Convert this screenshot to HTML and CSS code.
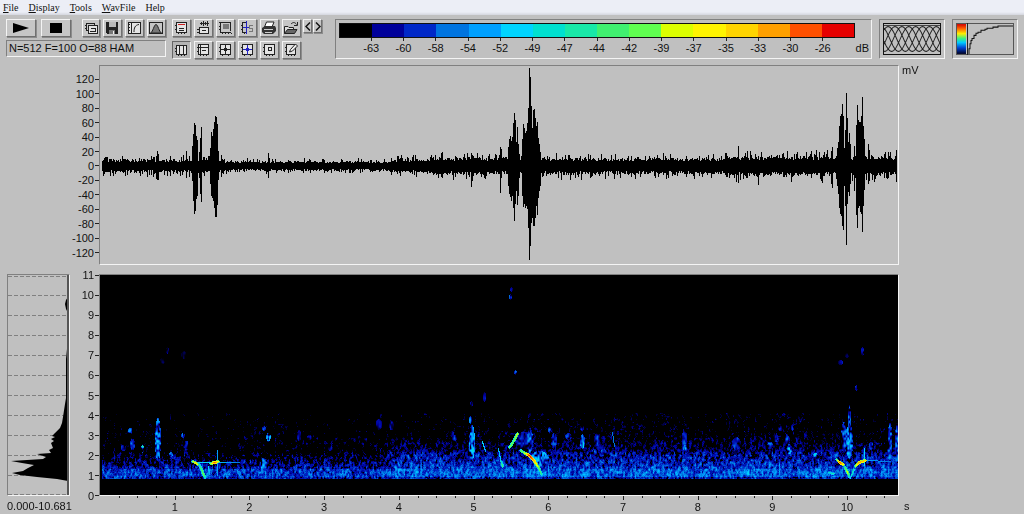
FILE: index.html
```html
<!DOCTYPE html>
<html lang="en">
<head>
<meta charset="utf-8">
<title>Sound analysis</title>
<link rel="stylesheet" href="styles.css">
</head>
<body>
<nav class="menu">
  <button class="menu-item"><u>F</u>ile</button>
  <button class="menu-item"><u>D</u>isplay</button>
  <button class="menu-item"><u>T</u>ools</button>
  <button class="menu-item"><u>W</u>avFile</button>
  <button class="menu-item">Help</button>
</nav>

<header class="toolbar">
  <div class="transport">
    <div class="row">
      <button class="btn wide" aria-label="Play"><svg width="16" height="10" viewBox="0 0 16 10"><path d="M0 0 16 5 0 10Z" fill="#000"/></svg></button>
      <button class="btn wide stop" aria-label="Stop"><svg width="12" height="10" viewBox="0 0 12 10"><path d="M0 0H12V10H0Z" fill="#000"/></svg></button>
      <button class="btn" aria-label="Copy"><svg class="icon" viewBox="0 0 16 14"><path class="k" d="M3.500 2.500H11.500V9.500H3.500ZM2 4.500H3M2 7.500H3"/><path class="k w" d="M5.500 4.500H14.500V12.500H5.500Z"/><path class="k" d="M7 10.500H13M8 7.500H12V10"/></svg></button>
      <button class="btn" aria-label="Save"><svg class="icon" viewBox="0 0 16 14"><path d="M2 1H14V13H3L2 12Z" fill="#222"/><path d="M5 1H12V6H5Z" fill="#b8b8b8"/><path d="M5 9H11V13H5Z" fill="#777"/><path d="M9 10H10V13H9Z" fill="#eee"/></svg></button>
      <button class="btn" aria-label="Transfer curve"><svg class="icon" viewBox="0 0 16 14"><path class="k w" d="M2.500 1.500H14.500V12.500H2.500Z"/><path class="k" d="M5.500 1V13M3 3.500H4M3 6.500H4M3 9.500H4"/><path class="k smooth" d="M8 11C8 7 9 4 13 3.500"/></svg></button>
      <button class="btn" aria-label="Window shape"><svg class="icon" viewBox="0 0 16 14"><path class="k" d="M1.500 1.500H14.500V12.500H1.500Z"/><path class="smooth" d="M2.500 12 C5 11 6 3.500 8 3.500S11 11 13.500 12Z" fill="#777" stroke="#222"/></svg></button>
    </div>
    <output class="status">N=512 F=100 O=88 HAM</output>
  </div>

  <div class="tools">
    <button class="btn" aria-label="Title"><svg class="icon" viewBox="0 0 16 14"><path class="k w" d="M3.500 1.500H13.500V11.500H3.500Z"/><path class="k" d="M2 4.500H3M2 8.500H3M5.500 12V13M8.500 12V13M11.500 12V13M6 7.500H11M6 9.500H11"/><path class="r" d="M5 3.500H12"/></svg></button>
    <button class="btn" aria-label="Envelope"><svg class="icon" viewBox="0 0 16 14"><path class="k" d="M5 2.500H14M6.500 1V4M8.500 0V5M10.500 1V4M12.500 0V5"/><path class="k w" d="M4.500 6.500H13.500V12.500H4.500Z"/><path class="k" d="M2 8.500H4M2 11.500H4M7 9.500H11"/></svg></button>
    <button class="btn" aria-label="Selection"><svg class="icon" viewBox="0 0 16 14"><path class="k" d="M3.500 1V11.500H14M2 1.500H13.500V10M2 5.500H3M2 8.500H3M5.500 12V13M8.500 12V13M11.500 12V13M14.500 12V13"/><path d="M6 3H12V8H6Z" fill="#777"/></svg></button>
    <button class="btn" aria-label="Spectrum"><svg class="icon" viewBox="0 0 16 14"><path class="k" d="M3.500 1.500H7M3.500 1V11.500H7M2 4.500H3M2 8.500H3M5.500 12V13"/><path class="b" d="M7.500 0V13M4 6.500H10"/><path d="M14 4.500H10.500V7.500H13.500V10.500H10" fill="none" stroke="#777"/></svg></button>
    <button class="btn" aria-label="Print"><svg class="icon smooth" viewBox="0 0 16 14"><path d="M5.500 1H13L11 6H3.500Z" fill="#fff" stroke="#222"/><path d="M1 7 4 5H14L15 7V10L12 13H3L1 11Z" fill="#333"/><path d="M3 8.500H12M4 11.500H11" stroke="#ccc"/></svg></button>
    <button class="btn" aria-label="Open"><svg class="icon smooth" viewBox="0 0 16 14"><path d="M1.500 12.500V5.500H5L6 6.500H10.500V8" fill="#ddd" stroke="#222"/><path d="M1.500 12.500 4.500 8.500H14L11.500 12.500Z" fill="#666" stroke="#222"/><path d="M8 3C10 1 12 1 13.500 3.500M14.500 1V4.500H11" fill="none" stroke="#222"/></svg></button>
    <button class="btn on" aria-label="Columns"><svg class="icon" viewBox="0 0 16 14"><path class="k w" d="M3.500 2.500H13.500V11.500H3.500Z"/><path class="k" d="M6.500 3V11M10.500 3V11M2 5.500H3M2 8.500H3M5.500 12V13M8.500 12V13M11.500 12V13"/></svg></button>
    <button class="btn" aria-label="Left panel"><svg class="icon" viewBox="0 0 16 14"><path class="k w" d="M3.500 1.500H13.500V11.500H3.500Z"/><path class="k" d="M5.500 2V11M4 4.500H13M7 7.500H11M2 4.500H3M2 8.500H3M5.500 12V13M8.500 12V13M11.500 12V13"/></svg></button>
    <button class="btn" aria-label="Crosshair"><svg class="icon" viewBox="0 0 16 14"><path class="k w" d="M3.500 1.500H13.500V11.500H3.500Z"/><path class="k" d="M8.500 2V11M4 6.500H13M2 4.500H3M2 8.500H3M5.500 12V13M11.500 12V13"/><path d="M7 5H10V8H7Z" fill="#222"/></svg></button>
    <button class="btn" aria-label="Blue crosshair"><svg class="icon" viewBox="0 0 16 14"><path class="k w" d="M3.500 1.500H13.500V11.500H3.500Z"/><path class="k" d="M2 4.500H3M2 8.500H3M5.500 12V13M11.500 12V13"/><path class="b" d="M8.500 2V12M4 6.500H13"/><path d="M7 5H10V8H7Z" fill="#2222c0"/></svg></button>
    <button class="btn" aria-label="Zoom box"><svg class="icon" viewBox="0 0 16 14"><path class="k w" d="M3.500 1.500H13.500V11.500H3.500Z"/><path class="k" d="M2 4.500H3M2 8.500H3M5.500 12V13M8.500 12V13M11.500 12V13M7.500 4.500H10.500V7.500H7.500Z"/></svg></button>
    <button class="btn" aria-label="Edit"><svg class="icon" viewBox="0 0 16 14"><path class="k w" d="M12.500 1.500H3.500V11.500H12.500Z"/><path class="k" d="M2 4.500H3M2 8.500H3M5.500 12V13M8.500 12V13M11.500 12V13"/><path class="smooth" d="M6.500 9 7.500 6.500 12.500 1 14.500 3 9.500 8Z" fill="#eee" stroke="#222"/></svg></button>
  </div>

  <div class="steps">
    <button class="btn step" aria-label="Previous"><svg width="6" height="9" viewBox="0 0 6 9"><path d="M5 .5 1 4.500 5 8.500" fill="none" stroke="#111" stroke-width="1.500"/></svg></button>
    <button class="btn step" aria-label="Next"><svg width="6" height="9" viewBox="0 0 6 9"><path d="M1 .5 5 4.500 1 8.500" fill="none" stroke="#111" stroke-width="1.500"/></svg></button>
  </div>

  <section class="panel scale">
    <div class="scale-body">
      <div class="swatches">
        <i class="c0"></i><i class="c1"></i><i class="c2"></i><i class="c3"></i><i class="c4"></i><i class="c5"></i><i class="c6"></i><i class="c7"></i><i class="c8"></i><i class="c9"></i><i class="c10"></i><i class="c11"></i><i class="c12"></i><i class="c13"></i><i class="c14"></i><i class="c15"></i>
      </div>
      <div class="scale-labels">
        <span></span><span class="lv">-63</span><span class="lv">-60</span><span class="lv">-58</span><span class="lv">-54</span><span class="lv">-52</span><span class="lv">-49</span><span class="lv">-47</span><span class="lv">-44</span><span class="lv">-42</span><span class="lv">-39</span><span class="lv">-37</span><span class="lv">-35</span><span class="lv">-33</span><span class="lv">-30</span><span class="lv">-26</span>
      </div>
    </div>
    <span class="db">dB</span>
  </section>

  <section class="panel side">
    <svg class="fill" viewBox="0 0 59 31" preserveAspectRatio="none">
      <path d="M.5 .5H58.500V30.500H.5Z" fill="none" stroke="#111"/>
      <path d="M1 2.500H58" fill="none" stroke="#444"/>
      <path id="lattice" fill="none" stroke="#222"/>
    </svg>
  </section>

  <section class="panel side">
    <svg class="fill" viewBox="0 0 58 31" preserveAspectRatio="none">
      <defs><linearGradient id="rainbow" x2="0" y2="1"><stop offset="0" stop-color="#d00000"/><stop offset=".15" stop-color="#ff6000"/><stop offset=".32" stop-color="#ffee00"/><stop offset=".48" stop-color="#40f080"/><stop offset=".62" stop-color="#00c8ff"/><stop offset=".8" stop-color="#0040d0"/><stop offset="1" stop-color="#000020"/></linearGradient></defs>
      <path d="M.5 .5H57.500V30.500H.5Z" fill="#c0c0c0" stroke="#555"/>
      <path d="M1 1H10V30H1Z" fill="url(#rainbow)"/>
      <path d="M11.500 0V31" stroke="#222"/>
      <path d="M13 30V25H14V20H15V17H16V15H18V12H20V10H22V9H25V7H29V6H31V5H37V4H42V3H57" fill="none" stroke="#111"/>
    </svg>
  </section>
</header>

<main class="plots">
  <div class="axis volts">
    <span>120</span><span>100</span><span>80</span><span>60</span><span>40</span><span>20</span><span>0</span><span>-20</span><span>-40</span><span>-60</span><span>-80</span><span>-100</span><span>-120</span>
  </div>
  <section class="plot wave"><canvas id="wave" width="798" height="198"></canvas></section>
  <span class="unit">mV</span>

  <section class="plot profile">
    <svg class="fill" viewBox="0 0 61 220" preserveAspectRatio="none">
      <path d="M0 1.500H59M0 20.500H59M0 40.500H59M0 60.500H59M0 80.500H59M0 100.500H59M0 120.500H59M0 140.500H59M0 160.500H59M0 180.500H59M0 200.500H59M0 219.500H59" stroke="#808080" stroke-dasharray="4 2"/>
      <path d="M60 64 58 84 58 123 57 129 55 142 54 148 52 153 47 158 44 161 47 162 43 164 46 166 43 168 45 173 41 175 43 178 29 179 38 182 35 184 3 186 14 188 26 190 20 193 15 196 4 198 12 200 29 202 49 204 60 206Z"/>
      <path d="M60 22 58 25 57 29 58 34 60 38Z"/>
      <path d="M60 0V220" stroke="#555" stroke-width="2"/>
    </svg>
  </section>
  <div class="axis freq">
    <span>11</span><span>10</span><span>9</span><span>8</span><span>7</span><span>6</span><span>5</span><span>4</span><span>3</span><span>2</span><span>1</span><span>0</span>
  </div>
  <section class="plot spectro"><canvas id="spectro" width="798" height="220"></canvas></section>

  <span class="range">0.000-10.681</span>
  <div class="time">
    <canvas id="ticks" class="ticks" width="798" height="4"></canvas>
    <div class="time-labels">
      <span></span><span>1</span><span>2</span><span>3</span><span>4</span><span>5</span><span>6</span><span>7</span><span>8</span><span>9</span><span>10</span>
    </div>
  </div>
  <span class="seconds">s</span>
</main>
<script src="plots.js"></script>
</body>
</html>
```

FILE: styles.css
```css
* { box-sizing: border-box; }
body {
  margin: 0;
  height: 100vh;
  display: flex;
  flex-direction: column;
  background: #c0c0c0;
  color: #111;
  font: 11px/14px "Liberation Sans", Arial, sans-serif;
}
button { font: inherit; color: inherit; padding: 0; border: 0; background: none; }

.menu {
  display: flex;
  gap: 10px;
  height: 15px;
  padding: 0 3px;
  background: linear-gradient(#eceef6 12px, #d4d6de);
}
.menu-item { font: 10px/14px "Liberation Serif", "Times New Roman", serif; }
.menu-item u { text-underline-offset: 1px; }

.toolbar { display: flex; align-items: stretch; padding: 4px 6px 0; }
.transport { width: 160px; display: flex; flex-direction: column; gap: 3px; }
.row { display: flex; gap: 3px; }
.btn {
  width: 19px;
  height: 18px;
  display: flex;
  align-items: center;
  justify-content: flex-start;
  background: #c6c6c6;
  border: 1px solid;
  border-color: #f4f4f4 #707070 #707070 #f4f4f4;
  box-shadow: 1px 1px 0 #8c8c8c;
}
.btn.wide { width: 30px; margin-right: 2px; justify-content: center; }
.btn.stop { margin-right: 8px; }
.btn.on { background: #b4b4b4; border-color: #666 #eee #eee #666; box-shadow: none; }
.icon { width: 16px; height: 14px; flex: none; shape-rendering: crispEdges; }
.k { fill: none; stroke: #222; }
.w { fill: #e4e4e4; }
.r { stroke: #d02020; fill: none; }
.b { stroke: #2222c0; fill: none; }
.smooth { shape-rendering: auto; }
.status {
  height: 17px;
  padding-left: 2px;
  line-height: 15px;
  border: 1px solid;
  border-color: #808080 #f4f4f4 #f4f4f4 #808080;
}
.tools {
  display: grid;
  grid-template-columns: repeat(6, 19px);
  gap: 3px;
  margin-left: 6px;
}
.steps { display: flex; gap: 1px; margin: 0 13px 0 2px; }
.step { width: 9px; height: 14px; justify-content: center; }

.panel {
  border: 1px solid;
  border-color: #808080 #f4f4f4 #f4f4f4 #808080;
  margin-right: 7px;
  padding: 3px;
}
.panel:last-child { margin-right: 0; }
.scale { flex: 1; display: flex; padding-right: 2px; }
.scale-body { flex: 1; }
.swatches { display: flex; height: 15px; border: 1px solid #111; }
.swatches i { flex: 1; }
.c0 { background: #000; }
.c1 { background: #00009a; }
.c2 { background: #0028c8; }
.c3 { background: #0074e0; }
.c4 { background: #00a0ff; }
.c5 { background: #00d4ff; }
.c6 { background: #00e0d0; }
.c7 { background: #18e8a8; }
.c8 { background: #40f070; }
.c9 { background: #60ff50; }
.c10 { background: #dcff00; }
.c11 { background: #fff400; }
.c12 { background: #ffd400; }
.c13 { background: #ffa000; }
.c14 { background: #ff5000; }
.c15 { background: #e60000; }
.scale-labels { display: grid; grid-template-columns: 1fr repeat(15, 2fr) 1fr; }
.lv { display: flex; flex-direction: column; align-items: center; min-width: 0; }
.lv::before { content: ""; width: 1px; height: 3px; background: #222; }
.db { width: 14px; align-self: flex-end; text-align: right; }
.side { width: 66px; }
.fill { display: block; width: 100%; height: 100%; }

.plots {
  flex: 1;
  min-height: 0;
  display: grid;
  grid-template-columns: 63px 29px minmax(0, 1fr) 125px;
  grid-template-rows: minmax(0, 200fr) 9px minmax(0, 222fr) 18px;
  padding: 6px 0 0 7px;
}
.plot {
  min-height: 0;
  min-width: 0;
  border: 1px solid;
  border-color: #808080 #f4f4f4 #f4f4f4 #808080;
}
.plot canvas { display: block; width: 100%; height: 100%; }
.axis { display: grid; grid-auto-rows: minmax(0, 1fr); text-align: right; }
.axis span { display: flex; align-items: center; justify-content: flex-end; gap: 1px; }
.axis span::after { content: ""; width: 4px; height: 1px; background: #222; }
.volts { grid-area: 1 / 1 / 2 / 3; padding: 7px 0 5px; }
.wave { grid-area: 1 / 3; }
.unit { grid-area: 1 / 4; padding-left: 3px; line-height: 11px; }
.profile { grid-area: 3 / 1; }
.freq { grid-area: 3 / 2; margin: -9px 0 -10px; }
.spectro { grid-area: 3 / 3; background: #000; }
.range { grid-area: 4 / 1; line-height: 20px; white-space: nowrap; }
.time { grid-area: 4 / 3; padding: 0 1px; }
.ticks { display: block; width: 100%; height: 4px; }
.time-labels {
  display: grid;
  grid-template-columns: 500fr repeat(10, 1000fr) 181fr;
  text-align: center;
}
.seconds { grid-area: 4 / 4; padding-left: 5px; line-height: 20px; }
```

FILE: plots.js
```js
let seed = 20;
function rnd() {
  seed = (seed * 1664525 + 1013904223) >>> 0;
  return seed / 4294967296;
}

/* Smooth value noise on a coarse lattice */
function makeNoise(sx, sy) {
  const cols = 256, cells = Float32Array.from({ length: cols * 256 }, rnd);
  return (x, y) => {
    const gx = x / sx, gy = y / sy, ix = Math.floor(gx), iy = Math.floor(gy);
    const fx = gx - ix, fy = gy - iy;
    const at = (i, j) => cells[(j & 255) * cols + (i & 255)];
    return (at(ix, iy) * (1 - fx) + at(ix + 1, iy) * fx) * (1 - fy)
      + (at(ix, iy + 1) * (1 - fx) + at(ix + 1, iy + 1) * fx) * fy;
  };
}

/* Lattice of overlapping sine waves, one every seventh pixel */
let d = '';
for (let n = 0; n < 5; n++)
  for (let x = 1; x <= 58; x++)
    d += (x === 1 ? 'M' : 'L') + x + ' ' + (15.5 + 12 * Math.sin((x + n * 7) * Math.PI * 2 / 35)).toFixed(1);
document.getElementById('lattice').setAttribute('d', d);

/* Waveform: [x, amplitude up, amplitude down] */
const peaks = [
  [54, 9, 8], [56, 10, 13], [57, 15, 14], [58, 12, 14], [70, 10, 10], [86, 15, 12],
  [92, 20, 15], [93, 32, 35], [94, 43, 48], [95, 41, 45], [96, 30, 33], [97, 26, 30], [99, 14, 12], [100, 28, 28], [101, 39, 36],
  [110, 18, 18], [111, 34, 30], [112, 30, 32], [113, 37, 35], [114, 44, 42], [115, 50, 51], [116, 49, 51], [117, 42, 39], [118, 15, 14], [121, 11, 11],
  [168, 13, 12], [342, 14, 12], [371, 13, 21], [372, 11, 15], [400, 19, 27], [401, 17, 12],
  [408, 19, 20], [409, 27, 28], [410, 30, 31], [411, 25, 35], [412, 29, 30], [413, 43, 42], [414, 53, 55], [415, 46, 38], [416, 24, 25], [417, 39, 39], [418, 22, 30], [419, 12, 12],
  [422, 27, 30], [423, 42, 41], [424, 38, 38], [425, 33, 42], [426, 35, 40], [427, 43, 43], [428, 58, 62], [429, 98, 94], [430, 89, 80], [431, 60, 57], [432, 38, 52], [433, 56, 60], [434, 57, 60], [435, 48, 52], [436, 40, 40], [437, 44, 49], [438, 28, 32], [439, 22, 25], [440, 14, 20],
  [638, 20, 17], [658, 10, 19], [731, 15, 18], [732, 19, 22], [737, 18, 20], [738, 24, 28], [739, 40, 42], [740, 50, 48], [741, 52, 50], [742, 62, 60], [743, 50, 64], [744, 18, 20],
  [745, 36, 40], [746, 73, 79], [747, 48, 38], [748, 24, 26], [749, 33, 30], [750, 22, 18], [754, 20, 25], [755, 10, 12], [756, 41, 49], [757, 61, 62], [758, 46, 42], [759, 44, 40], [760, 44, 46], [761, 50, 48], [762, 69, 66], [763, 40, 40], [764, 27, 24], [768, 22, 18], [769, 16, 15], [788, 14, 12], [796, 16, 16]
];
const byX = new Map(peaks.map(p => [p[0], p]));
const wave = document.getElementById('wave').getContext('2d');
wave.fillStyle = '#000';
for (let x = 2; x < 797; x++) {
  let base = x < 125 ? 5.5 : x < 290 ? 4 : x < 330 ? 5.5 : x < 480 ? 7 : x < 625 ? 6.5 : 8;
  const sample = () => base * (0.75 + 0.5 * rnd()) + (rnd() > 0.7 ? base * 0.9 * rnd() : 0);
  let up = sample();
  let down = sample();
  const p = byX.get(x);
  if (p) { up = p[1]; down = p[2]; }
  wave.fillRect(x, Math.round(100 - up), 1, Math.round(up + down));
}

/* Spectrogram */
const W = 798, H = 220;
const pal = ['#000000', '#00009a', '#0028c8', '#0074e0', '#00a0ff', '#00d4ff', '#00e0d0', '#18e8a8', '#40f070', '#60ff50', '#dcff00', '#fff400', '#ffd400', '#ffa000', '#ff5000', '#e60000']
  .map(c => [1, 3, 5].map(i => parseInt(c.substr(i, 2), 16)));
const field = new Float32Array(W * H);
function put(x, y, v) {
  x = Math.round(x); y = Math.round(y);
  if (x >= 0 && x < W && y >= 0 && y < H) field[y * W + x] = Math.max(field[y * W + x], v);
}
const fine = makeNoise(1.4, 2.4), coarse = makeNoise(9, 7);
for (let x = 2; x < W; x++) {
  const strong = Math.min(1, Math.max(0, (x - 270) / 40));
  const busy = x > 625 && x < 712 ? 1 : x > 400 && x < 590 ? 0.6 : strong * 0.4;
  for (let y = 138; y < 204; y++) {
    const h = 203 - y;
    let e;
    if (h < 2) e = 1.6;
    else if (h < 10) e = 2.2 + strong * 0.6;
    else e = 1.3 + strong * 0.9 - (h - 10) * (0.12 - strong * 0.03);
    const floor = -0.8 + busy * 0.8 - Math.max(0, h - 35) * 0.025;
    e = Math.max(e, floor);
    const v = e + (fine(x, y) - 0.5) * 3.8 + (coarse(x, y) - 0.5) * 1 + (rnd() - 0.5) * 1.2;
    put(x, y, v < 0.3 ? 0 : h > 26 ? Math.min(v, 2) * 0.75 : v);
  }
}
/* Patches: [centre x, centre y, width, height, strength] */
const blobs = [
  [57, 164, 5, 42, 3.2], [57, 168, 4, 26, 3.6], [30, 155, 4, 4, 2.4], [32, 169, 4, 10, 2.2], [23, 172, 4, 5, 1.6], [42, 173, 2, 7, 4.8], [70, 179, 3, 4, 3.5], [82, 160, 3, 4, 2.8], [86, 170, 4, 8, 2], [168, 161, 4, 7, 4.4], [163, 153, 3, 4, 1.8], [198, 160, 3, 10, 1.3], [209, 162, 4, 4, 1], [230, 173, 4, 4, 1.2], [278, 149, 5, 10, 1.1], [291, 149, 4, 9, 1.2],
  [67, 75, 2, 6, 1.1], [62, 85, 4, 5, 0.5], [83, 79, 5, 7, 0.5], [163, 190, 6, 14, 3], [297, 193, 6, 10, 3.4],
  [371, 167, 5, 34, 4], [370, 144, 2, 7, 3], [371, 128, 2, 5, 1.6], [384, 121, 2, 9, 1.5], [351, 158, 3, 5, 2], [354, 162, 4, 5, 2],
  [410, 21, 2, 5, 2.4], [411, 14, 2, 4, 1.2], [415, 97, 2, 4, 2.8],
  [424, 165, 18, 16, 1.7], [429, 165, 5, 24, 3.6], [439, 184, 18, 16, 3.6], [449, 154, 3, 5, 2.5], [453, 165, 5, 15, 2.2], [468, 161, 6, 6, 2], [482, 166, 4, 14, 3.8], [481, 152, 3, 5, 2], [494, 176, 4, 4, 4], [497, 164, 6, 12, 1.7], [503, 176, 4, 4, 2.8], [523, 179, 3, 4, 3.6],
  [584, 165, 4, 24, 1.7], [585, 172, 4, 5, 3.6], [636, 168, 8, 12, 1.8], [669, 170, 5, 6, 3.2], [675, 162, 4, 8, 2], [686, 163, 3, 9, 2.2], [689, 173, 4, 9, 4.6], [680, 153, 4, 4, 2], [692, 152, 2, 6, 1.6], [715, 180, 4, 4, 4.6],
  [749, 144, 2, 30, 3.2], [749, 166, 6, 34, 4], [743, 162, 5, 30, 2.6], [789, 165, 3, 40, 3], [796, 170, 3, 46, 2.8], [770, 170, 3, 7, 2.4], [740, 87, 4, 4, 1.2], [746, 80, 3, 4, 0.6], [762, 76, 2, 8, 1.8], [756, 112, 2, 5, 2]
];
for (const [cx, cy, w, h, s] of blobs)
  for (let y = -h / 2; y <= h / 2; y++)
    for (let x = -w / 2; x <= w / 2; x++) {
      const r = Math.hypot(x / (w / 2 + 0.5), y / (h / 2 + 0.5));
      if (r < 1) put(cx + x, cy + y, s * (1.1 - r * 0.5) + (fine(cx + x, cy + y) - 0.55) * s * 1.9);
    }
/* Calls: strokes of [x, y, level] points */
const calls = [
  [[92, 186, 9], [95, 187, 12], [97, 189, 10]], [[98, 188, 6], [101, 194, 8], [103, 199, 9], [105, 203, 5]],
  [[97, 187, 5], [110, 187, 5], [140, 187, 3]], [[110, 188, 9], [114, 187, 14], [118, 186, 10]],
  [[117, 175, 4], [117, 200, 4]], [[108, 191, 5], [109, 199, 4]],
  [[382, 166, 5], [385, 176, 4]], [[512, 157, 3], [514, 171, 3]],
  [[398, 173, 4], [400, 184, 5], [402, 191, 8]],
  [[409, 172, 9], [414, 164, 9], [417, 158, 10]],
  [[420, 175, 8], [425, 178, 10], [429, 180, 15], [434, 186, 12], [438, 192, 9], [441, 199, 7]],
  [[736, 184, 8], [739, 187, 14], [743, 189, 11]], [[744, 191, 7], [747, 197, 10], [749, 202, 5]],
  [[750, 203, 5], [753, 194, 7]], [[755, 191, 9], [758, 187, 13], [765, 185, 12]],
  [[764, 173, 5], [764, 190, 5]], [[765, 185, 4], [790, 186, 3]], [[728, 197, 6], [733, 198, 7]]
];
for (const c of calls)
  for (let i = 1; i < c.length; i++)
    for (let t = 0; t <= 1; t += 0.02) {
      const [a, b] = [c[i - 1], c[i]];
      const x = a[0] + (b[0] - a[0]) * t, y = a[1] + (b[1] - a[1]) * t, v = a[2] + (b[2] - a[2]) * t;
      put(x, y, v);
      if (v > 6) { put(x, y + 1, v - 2); put(x + 1, y, v - 2); put(x - 1, y, v - 4); put(x, y - 1, v - 3); }
    }
const spec = document.getElementById('spectro').getContext('2d');
const img = spec.createImageData(W, H);
for (let i = 0; i < W * H; i++) {
  const v = Math.max(0, Math.min(14.99, field[i]));
  const lo = Math.floor(v), f = v - lo;
  for (let k = 0; k < 3; k++) img.data[i * 4 + k] = pal[lo][k] * (1 - f) + pal[lo + 1][k] * f;
  img.data[i * 4 + 3] = 255;
}
spec.putImageData(img, 0, 0);

/* Quarter-second ticks */
const ticks = document.getElementById('ticks').getContext('2d');
ticks.fillStyle = '#222';
for (let q = 1; q <= 42; q++)
  ticks.fillRect(Math.round(q * 0.25 * W / 10.681), 0, 1, q % 4 ? 2 : 4);
```
